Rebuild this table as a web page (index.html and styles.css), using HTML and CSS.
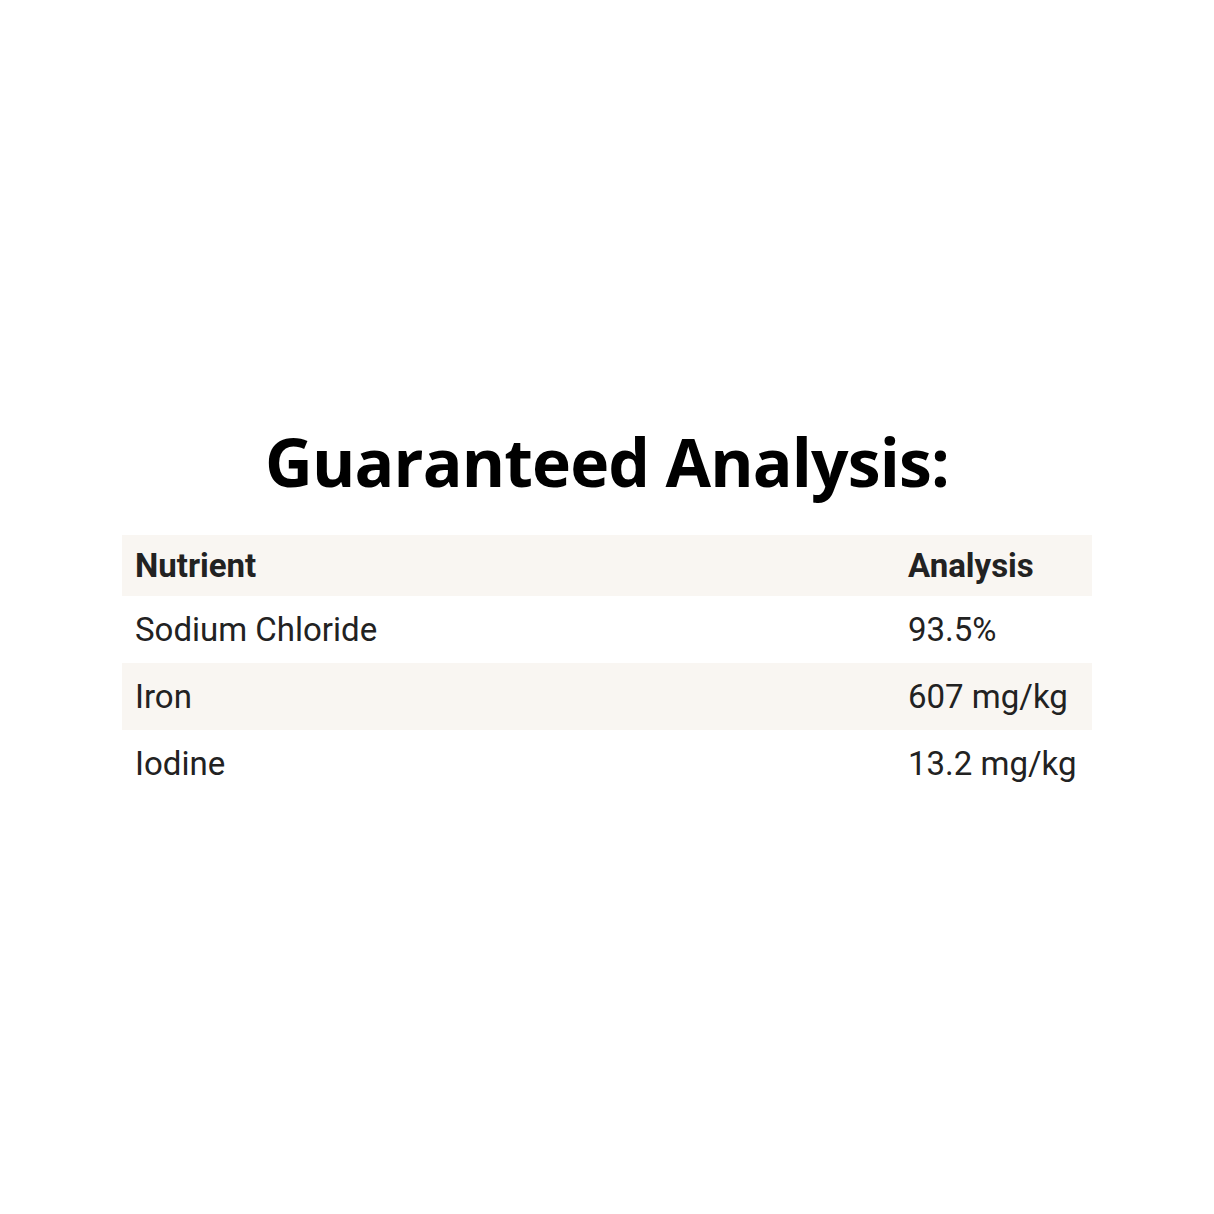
FILE: index.html
```html
<!DOCTYPE html>
<html lang="en">
<head>
<meta charset="utf-8">
<title>Guaranteed Analysis</title>
<link rel="stylesheet" href="styles.css">
</head>
<body>
<main class="page">
  <h1 class="title">Guaranteed Analysis:</h1>
  <div class="table">
    <div class="row head"><div class="cell">Nutrient</div><div class="cell">Analysis</div></div>
    <div class="row"><div class="cell">Sodium Chloride</div><div class="cell">93.5%</div></div>
    <div class="row alt"><div class="cell">Iron</div><div class="cell">607 mg/kg</div></div>
    <div class="row"><div class="cell">Iodine</div><div class="cell">13.2 mg/kg</div></div>
  </div>
</main>
</body>
</html>
```
FILE: styles.css
```css
html, body {
  margin: 0;
  padding: 0;
  background: #ffffff;
}
.page {
  width: 1214px;
  height: 1214px;
  display: flex;
  flex-direction: column;
  align-items: center;
  padding-top: 415px;
  box-sizing: border-box;
}
.title {
  margin: 0;
  font-family: "Open Sans", sans-serif;
  font-weight: 700;
  font-size: 66px;
  line-height: 92px;
  color: #000;
  letter-spacing: -0.85px;
}
.table {
  margin-top: 28px;
  width: 970px;
  font-family: Roboto, sans-serif;
  color: #222;
}
.row {
  display: grid;
  grid-template-columns: 773px 1fr;
  height: 67px;
  align-items: center;
}
.row.head, .row.alt {
  background: #f9f6f2;
}
.row.head {
  height: 61px;
  font-weight: 700;
}
.cell {
  padding-left: 13px;
  font-size: 33px;
  line-height: 40px;
}
```
